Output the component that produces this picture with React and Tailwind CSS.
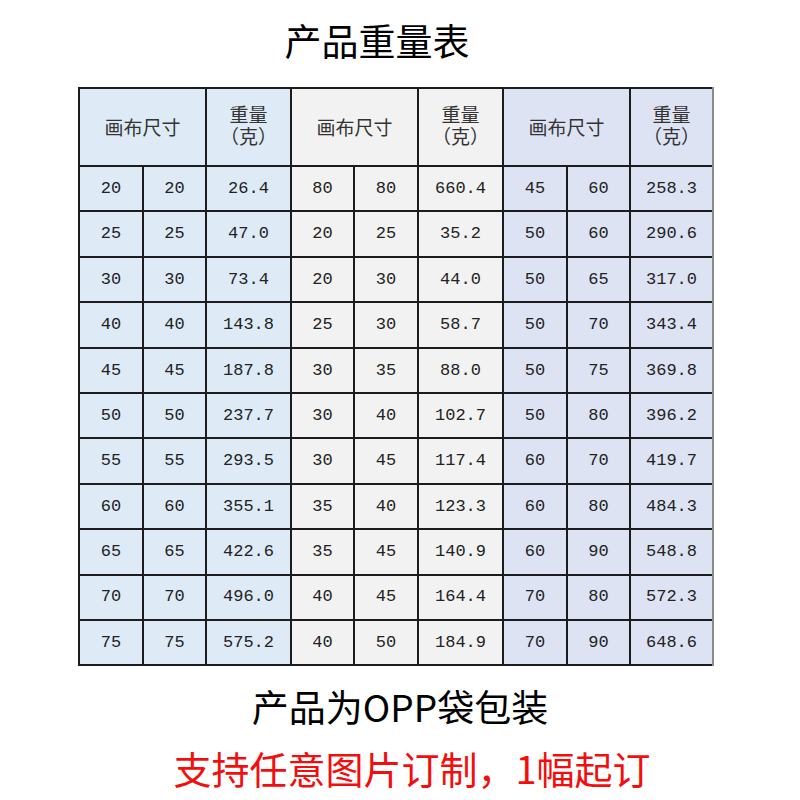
const groups = [
  {
    bg: "bg-[#deebf7]",
    rows: [
      [20, 20, "26.4"],
      [25, 25, "47.0"],
      [30, 30, "73.4"],
      [40, 40, "143.8"],
      [45, 45, "187.8"],
      [50, 50, "237.7"],
      [55, 55, "293.5"],
      [60, 60, "355.1"],
      [65, 65, "422.6"],
      [70, 70, "496.0"],
      [75, 75, "575.2"],
    ],
  },
  {
    bg: "bg-[#f2f2f2]",
    rows: [
      [80, 80, "660.4"],
      [20, 25, "35.2"],
      [20, 30, "44.0"],
      [25, 30, "58.7"],
      [30, 35, "88.0"],
      [30, 40, "102.7"],
      [30, 45, "117.4"],
      [35, 40, "123.3"],
      [35, 45, "140.9"],
      [40, 45, "164.4"],
      [40, 50, "184.9"],
    ],
  },
  {
    bg: "bg-[#dee3f4]",
    rows: [
      [45, 60, "258.3"],
      [50, 60, "290.6"],
      [50, 65, "317.0"],
      [50, 70, "343.4"],
      [50, 75, "369.8"],
      [50, 80, "396.2"],
      [60, 70, "419.7"],
      [60, 80, "484.3"],
      [60, 90, "548.8"],
      [70, 80, "572.3"],
      [70, 90, "648.6"],
    ],
  },
];

const cjk = { fontFamily: '"Noto Sans CJK SC", sans-serif' };
// Liberation Sans first keeps the line box tight; CJK glyphs fall through to Noto
const cjkTight = { fontFamily: '"Liberation Sans", "Noto Sans CJK SC", sans-serif' };
const mono = { fontFamily: '"Liberation Mono", "DejaVu Sans Mono", monospace' };

export default function App() {
  return (
    <div className="w-[800px] h-[800px] bg-white flex flex-col" style={cjk}>
      <div className="h-[87px] flex items-center justify-center pr-[46px] pb-[6px]">
        <h1 className="text-[37px] leading-none font-normal text-black">产品重量表</h1>
      </div>

      <div className="ml-[78px] w-[636px] grid grid-cols-[62px_61px_83px_61px_62px_83px_62px_61px_81px] grid-rows-[76px_repeat(11,43.4px)] gap-[2px] bg-[#1c1c1c] pl-[2px] pt-[2px] pb-[2px] border-r-2 border-[#8a8a8a]">
        {groups.map((g, i) => (
          <HeaderCells key={"h" + i} bg={g.bg} />
        ))}
        {groups[0].rows.map((_, r) =>
          groups.map((g, i) =>
            g.rows[r].map((v, c) => (
              <div
                key={r + "-" + i + "-" + c}
                className={"flex items-center justify-center text-[17px] text-[#222] " + g.bg}
                style={mono}
              >
                {v}
              </div>
            ))
          )
        )}
      </div>

      <div className="h-[80px] flex items-center justify-center">
        <p className="text-[37px] leading-none font-normal text-black">产品为OPP袋包装</p>
      </div>
      <div className="h-[44px] flex items-center justify-center pl-[24px]">
        <p className="text-[38px] leading-none font-normal text-[#f50c0c]">支持任意图片订制，1幅起订</p>
      </div>
    </div>
  );
}

function HeaderCells({ bg }) {
  return (
    <>
      <div className={"col-span-2 flex items-center justify-center text-[19px] text-[#333] " + bg}>
        画布尺寸
      </div>
      <div
        className={"flex flex-col items-center justify-center text-[19px] leading-[22px] text-[#333] " + bg}
        style={cjkTight}
      >
        <span>重量</span>
        <span>（克）</span>
      </div>
    </>
  );
}
